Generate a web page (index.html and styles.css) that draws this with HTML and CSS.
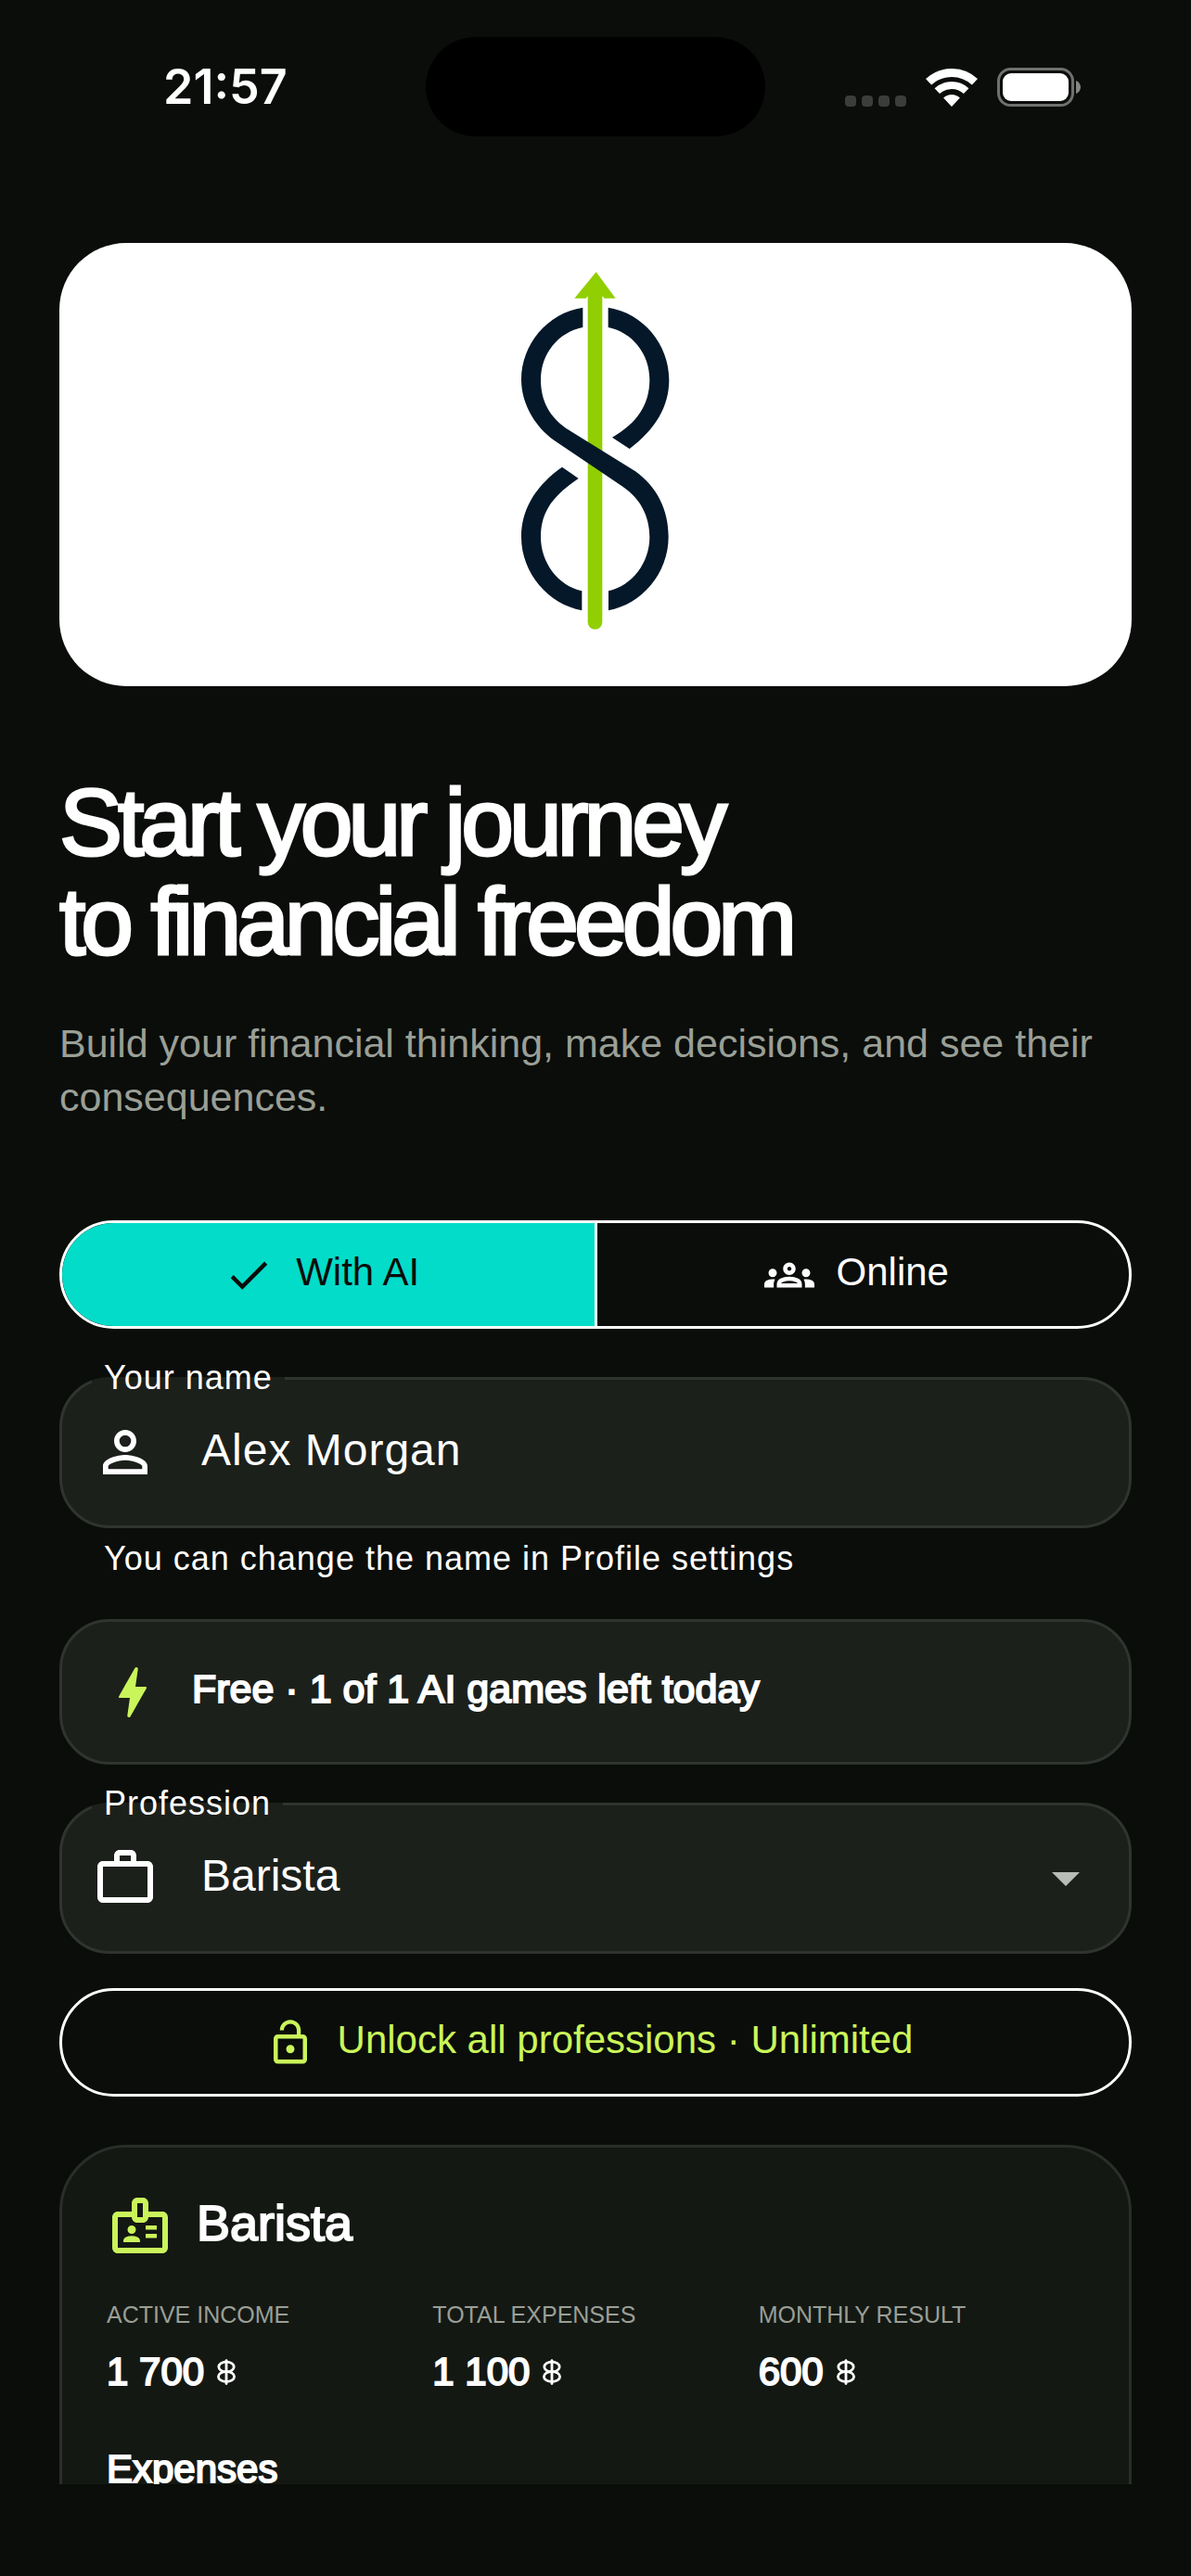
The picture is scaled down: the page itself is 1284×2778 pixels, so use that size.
FILE: index.html
```html
<!DOCTYPE html>
<html lang="en">
<head>
    <meta charset="UTF-8">
    <meta name="viewport" content="width=device-width, initial-scale=1.0">
    <title>Start your journey</title>
    <link rel="stylesheet" href="styles.css">
</head>
<body>

<!-- Currency sign used next to amounts -->
<svg class="defs" aria-hidden="true">
    <symbol id="coin" viewBox="0 0 20 28">
        <g fill="none" stroke="currentColor" stroke-width="2.800">
            <ellipse cx="10" cy="8.500" rx="8.200" ry="5.400"/>
            <ellipse cx="10" cy="19" rx="8.600" ry="5.400"/>
            <path d="M10 2v24.500" stroke-linecap="round"/>
        </g>
        <path d="M10 0l3.500 4h-7z" fill="currentColor"/>
    </symbol>
</svg>

<div class="screen">
    <header class="status-bar">
        <span class="time">21:57</span>
        <span class="island"></span>
        <span class="indicators">
            <svg class="dots" viewBox="0 0 66 12">
                <rect width="12" height="12" rx="4"/>
                <rect x="18" width="12" height="12" rx="4"/>
                <rect x="36" width="12" height="12" rx="4"/>
                <rect x="54" width="12" height="12" rx="4"/>
            </svg>
            <svg class="wifi" viewBox="0 0 56 41">
                <path d="M3.100 14.300A36.500 36.500 0 0 1 52.900 14.300" fill="none" stroke="#fff" stroke-width="9"/>
                <path d="M12.300 24.200A23 23 0 0 1 43.700 24.200" fill="none" stroke="#fff" stroke-width="8"/>
                <path d="M28 41L19.100 31.500A13 13 0 0 1 36.900 31.500Z" fill="#fff"/>
            </svg>
            <svg class="battery" viewBox="0 0 90 42">
                <rect x="1.500" y="1.500" width="80" height="39" rx="13" fill="none" stroke="#6f716f" stroke-width="3"/>
                <rect x="6" y="6" width="71" height="30" rx="9" fill="#fff"/>
                <path d="M85 14c3 1 5 4 5 7s-2 6-5 7z" fill="#858785"/>
            </svg>
        </span>
    </header>

    <main class="content">
        <div class="logo">
            <svg viewBox="-24 6 900 1434" role="img" aria-label="Logo">
                <path fill="#91cf02" d="M428 100L491 185H455L448 178V1233A23.500 23.500 0 0 1 401 1233V178L395 185H358Z"/>
                <g fill="#041829">
                    <path d="M385 215C270 232 186 335 186 448C186 530 235 610 305 653L515 795C570 832 601 890 601 957C601 1040 545 1115 468 1132V1195C575 1175 662 1075 662 957C662 870 625 795 555 745L330 605C280 570 249 520 249 448C249 365 305 295 385 279Z"/>
                    <path d="M467 215C580 232 664 335 664 448C664 535 620 610 536 672L480 635C560 590 601 530 601 448C601 365 545 295 467 279Z"/>
                    <path d="M382 1195C275 1175 186 1075 186 957C186 865 235 790 318 731L371 768C295 820 249 870 249 957C249 1040 305 1115 382 1132Z"/>
                </g>
            </svg>
        </div>

        <h1>Start your journey<br>to financial freedom</h1>
        <p class="lead">Build your financial thinking, make decisions, and see their consequences.</p>

        <!-- Game mode -->
        <div class="segmented">
            <button type="button" class="segment active" aria-pressed="true">
                <svg class="icon small" viewBox="0 0 24 24"><path d="M9 16.170L4.830 12l-1.420 1.410L9 19 21 7l-1.410-1.410z"/></svg>
                <span class="text">With AI</span>
            </button>
            <button type="button" class="segment" aria-pressed="false">
                <svg class="icon small" viewBox="0 0 24 24"><path d="M4 13c1.100 0 2-.9 2-2s-.9-2-2-2-2 .9-2 2 .9 2 2 2zm1.130 1.100C4.760 14.040 4.390 14 4 14c-.99 0-1.930.21-2.780.58C.48 14.900 0 15.620 0 16.430V18h4.500v-1.610c0-.83.23-1.610.63-2.290zM20 13c1.100 0 2-.9 2-2s-.9-2-2-2-2 .9-2 2 .9 2 2 2zm4 3.430c0-.81-.48-1.530-1.220-1.850C21.930 14.210 20.990 14 20 14c-.39 0-.76.04-1.130.1.400.68.63 1.460.63 2.290V18H24v-1.570zm-7.760-2.780C15.070 13.130 13.630 12.750 12 12.750s-3.070.39-4.240.9C6.680 14.130 6 15.210 6 16.390V18h12v-1.610c0-1.180-.68-2.260-1.760-2.740zM8.070 16c.09-.23.13-.39.91-.69.97-.38 1.990-.56 3.020-.56s2.050.18 3.020.56c.77.3.81.46.91.69H8.070zM12 8c.55 0 1 .45 1 1s-.45 1-1 1-1-.45-1-1 .45-1 1-1m0-2c-1.660 0-3 1.340-3 3s1.340 3 3 3 3-1.340 3-3-1.340-3-3-3z"/></svg>
                <span class="text">Online</span>
            </button>
        </div>

        <!-- Player name -->
        <fieldset class="field name-field">
            <legend><label for="name">Your name</label></legend>
            <div class="field-row">
                <svg class="icon" viewBox="0 0 24 24"><path d="M12 5.900a2.100 2.100 0 1 1 0 4.200 2.100 2.100 0 0 1 0-4.200m0 9c2.970 0 6.100 1.460 6.100 2.100v1.100H5.900V17c0-.64 3.130-2.100 6.100-2.100M12 4C9.790 4 8 5.790 8 8s1.790 4 4 4 4-1.790 4-4-1.790-4-4-4zm0 9c-2.670 0-8 1.340-8 4v3h16v-3c0-2.660-5.330-4-8-4z"/></svg>
                <input type="text" id="name" value="Alex Morgan" aria-describedby="nameHint">
            </div>
        </fieldset>
        <p class="hint" id="nameHint">You can change the name in Profile settings</p>

        <div class="quota">
            <svg class="icon" viewBox="0 0 24 24"><path d="M10.670 21c-.35 0-.62-.31-.57-.66L11 14H7.500c-.88 0-.33-.75-.31-.78 1.260-2.230 3.150-5.530 5.650-9.930.1-.18.3-.29.5-.29.35 0 .62.31.57.66L13.010 10h3.510c.4 0 .62.19.4.66-3.290 5.740-5.200 9.090-5.750 10.050-.1.180-.29.290-.5.290z"/></svg>
            <span class="text strong">Free · 1 of 1 AI games left today</span>
        </div>

        <!-- Profession -->
        <fieldset class="field">
            <legend><label for="profession">Profession</label></legend>
            <div class="field-row">
                <svg class="icon" viewBox="0 0 24 24"><path d="M14 6V4h-4v2h4zM4 8v11h16V8H4zm16-2c1.110 0 2 .89 2 2v11c0 1.110-.89 2-2 2H4c-1.110 0-2-.89-2-2l.010-11c0-1.110.88-2 1.990-2h4V4c0-1.110.89-2 2-2h4c1.110 0 2 .89 2 2v2h4z"/></svg>
                <select id="profession">
                    <option>Barista</option>
                </select>
                <svg class="icon caret" viewBox="0 0 24 24"><path d="M7 10l5 5 5-5z"/></svg>
            </div>
        </fieldset>

        <button type="button" class="unlock">
            <svg class="icon small" viewBox="0 0 24 24"><path d="M12 17c1.100 0 2-.9 2-2s-.9-2-2-2-2 .9-2 2 .9 2 2 2zm6-9h-1V6c0-2.760-2.240-5-5-5S7 3.240 7 6h1.900c0-1.710 1.390-3.100 3.100-3.100s3.100 1.390 3.100 3.100v2H6c-1.100 0-2 .9-2 2v10c0 1.100.9 2 2 2h12c1.100 0 2-.9 2-2V10c0-1.100-.9-2-2-2zm0 12H6V10h12v10z"/></svg>
            <span class="text">Unlock all professions · Unlimited</span>
        </button>

        <section class="card">
            <div class="card-head">
                <svg class="icon" viewBox="0 0 24 24"><path d="M20 7h-5V4c0-1.100-.9-2-2-2h-2c-1.100 0-2 .9-2 2v3H4c-1.100 0-2 .9-2 2v11c0 1.100.9 2 2 2h16c1.100 0 2-.9 2-2V9c0-1.100-.9-2-2-2zm-9-3h2v5h-2V4zm9 16H4V9h5c0 1.100.9 2 2 2h2c1.100 0 2-.9 2-2h5v11zM9 15a1.500 1.500 0 1 0 0-3 1.500 1.500 0 0 0 0 3zm2.080 1.180C10.440 15.900 9.740 15.750 9 15.750s-1.440.15-2.080.43c-.56.24-.92.78-.92 1.390V18h6v-.43c0-.61-.36-1.150-.92-1.390zM14 12h4v1.500h-4zm0 3h4v1.500h-4z"/></svg>
                <h2>Barista</h2>
            </div>
            <dl class="stats">
                <div>
                    <dt>ACTIVE INCOME</dt>
                    <dd>1 700 <svg class="coin"><use href="#coin"/></svg></dd>
                </div>
                <div>
                    <dt>TOTAL EXPENSES</dt>
                    <dd>1 100 <svg class="coin"><use href="#coin"/></svg></dd>
                </div>
                <div>
                    <dt>MONTHLY RESULT</dt>
                    <dd>600 <svg class="coin"><use href="#coin"/></svg></dd>
                </div>
            </dl>
            <h3>Expenses</h3>
        </section>
    </main>
</div>

</body>
</html>
```

FILE: styles.css
```css
* {
    box-sizing: border-box;
}
body {
    margin: 0;
    background-color: #0a0d0a;
    color: #fff;
    font-family: "Liberation Sans", Helvetica, Arial, sans-serif;
    font-size: 42px;
}
h1, h2, h3, p, dl, dd {
    margin: 0;
}
button, input, select {
    font: inherit;
    color: inherit;
    letter-spacing: inherit;
}
svg {
    display: block;
    flex: none;
}
.defs {
    position: absolute;
    width: 0;
    height: 0;
}
.screen {
    display: flex;
    flex-direction: column;
    height: 100vh;
    padding-bottom: 99px;
}

/* Status bar */
.status-bar {
    display: grid;
    grid-template-columns: 1fr 366px 1fr;
    align-items: center;
    padding-top: 40px;
}
.time {
    padding-left: 176px;
    font-family: Inter, sans-serif;
    font-size: 52px;
    font-weight: 600;
}
.island {
    height: 107px;
    border-radius: 54px;
    background-color: #000;
}
.indicators {
    display: flex;
    justify-content: flex-end;
    align-items: flex-end;
    gap: 21px;
    padding-right: 119px;
}
.dots {
    width: 66px;
    height: 12px;
    fill: #3b3d3b;
}
.wifi {
    width: 56px;
    height: 41px;
}
.battery {
    width: 90px;
    height: 42px;
}

/* Scrolling content */
.content {
    flex: 1;
    min-height: 0;
    overflow-y: auto;
    scrollbar-width: none;
    padding: 115px 64px 0;
}
.logo {
    display: flex;
    justify-content: center;
    border-radius: 72px;
    background-color: #fff;
}
.logo svg {
    width: 300px;
    height: 478px;
}
h1 {
    margin-top: 94px;
    font-size: 102px;
    font-weight: 400;
    line-height: 107px;
    letter-spacing: -5px;
    -webkit-text-stroke: 3px currentColor;
}
.lead {
    margin-top: 48px;
    font-size: 43px;
    line-height: 58px;
    color: #9a9f96;
}
.icon {
    width: 72px;
    height: 72px;
    fill: currentColor;
}
.icon.small {
    width: 54px;
    height: 54px;
}
.text {
    padding-bottom: 6px;
}
.strong, h2, h3, dd {
    font-weight: 400;
    -webkit-text-stroke: 2px currentColor;
}
.strong {
    font-size: 43px;
}

.segmented {
    display: flex;
    height: 117px;
    margin-top: 104px;
    border: 3px solid #fff;
    border-radius: 59px;
    overflow: hidden;
}
.segment {
    flex: 1;
    display: flex;
    align-items: center;
    justify-content: center;
    gap: 24px;
    padding: 0 14px 0 0;
    border: none;
    background: none;
}
.segment + .segment {
    border-left: 3px solid #fff;
}
.segment.active {
    background-color: #03dcc9;
    color: #0a0d0a;
}

.field {
    min-width: 0;
    margin: 21px 0 0;
    padding: 0 32px 20px;
    border: 3px solid #2f342f;
    border-radius: 54px;
    background-color: #1c201b;
}
.name-field {
    margin-top: 32px;
}
.field legend {
    padding: 0 13px;
    font-size: 36px;
    line-height: 42px;
    letter-spacing: 1px;
}
.field-row {
    display: flex;
    align-items: center;
    height: 118px;
}
.field input, .field select {
    flex: 1;
    min-width: 0;
    height: 72px;
    margin-left: 46px;
    padding: 0 0 6px;
    border: none;
    outline: none;
    background: none;
    font-size: 48px;
}
.field input {
    letter-spacing: 1px;
}
.field select {
    appearance: none;
}
.caret {
    color: #b8bdb7;
}
.hint {
    margin-top: 9px;
    padding-left: 48px;
    font-size: 36px;
    line-height: 48px;
    letter-spacing: 1px;
}

.quota {
    display: flex;
    align-items: center;
    gap: 28px;
    height: 157px;
    margin-top: 41px;
    padding: 0 40px;
    border: 3px solid #2f342f;
    border-radius: 54px;
    background-color: #1c201b;
}
.quota .icon, .card .icon {
    color: #caf55a;
}

.unlock {
    display: flex;
    align-items: center;
    justify-content: center;
    gap: 24px;
    width: 100%;
    height: 117px;
    margin-top: 37px;
    padding: 0 14px 0 0;
    border: 3px solid #fff;
    border-radius: 59px;
    background: none;
    color: #caf55a;
}

/* Profession card */
.card {
    margin-top: 52px;
    padding: 48px 48px 144px;
    border: 3px solid #2a2e29;
    border-radius: 72px;
    background-color: #141813;
}
.card-head {
    display: flex;
    align-items: center;
    gap: 25px;
}
h2 {
    padding-bottom: 6px;
    font-size: 54px;
}
.stats {
    display: grid;
    grid-template-columns: repeat(3, 1fr);
    margin-top: 45px;
}
dt {
    font-size: 25px;
    line-height: 30px;
    color: #9a9f96;
}
dd {
    display: flex;
    align-items: center;
    gap: 14px;
    margin-top: 23px;
    line-height: 48px;
}
.coin {
    width: 20px;
    height: 28px;
}
h3 {
    margin-top: 57px;
    font-size: 42px;
    line-height: 48px;
}
```
